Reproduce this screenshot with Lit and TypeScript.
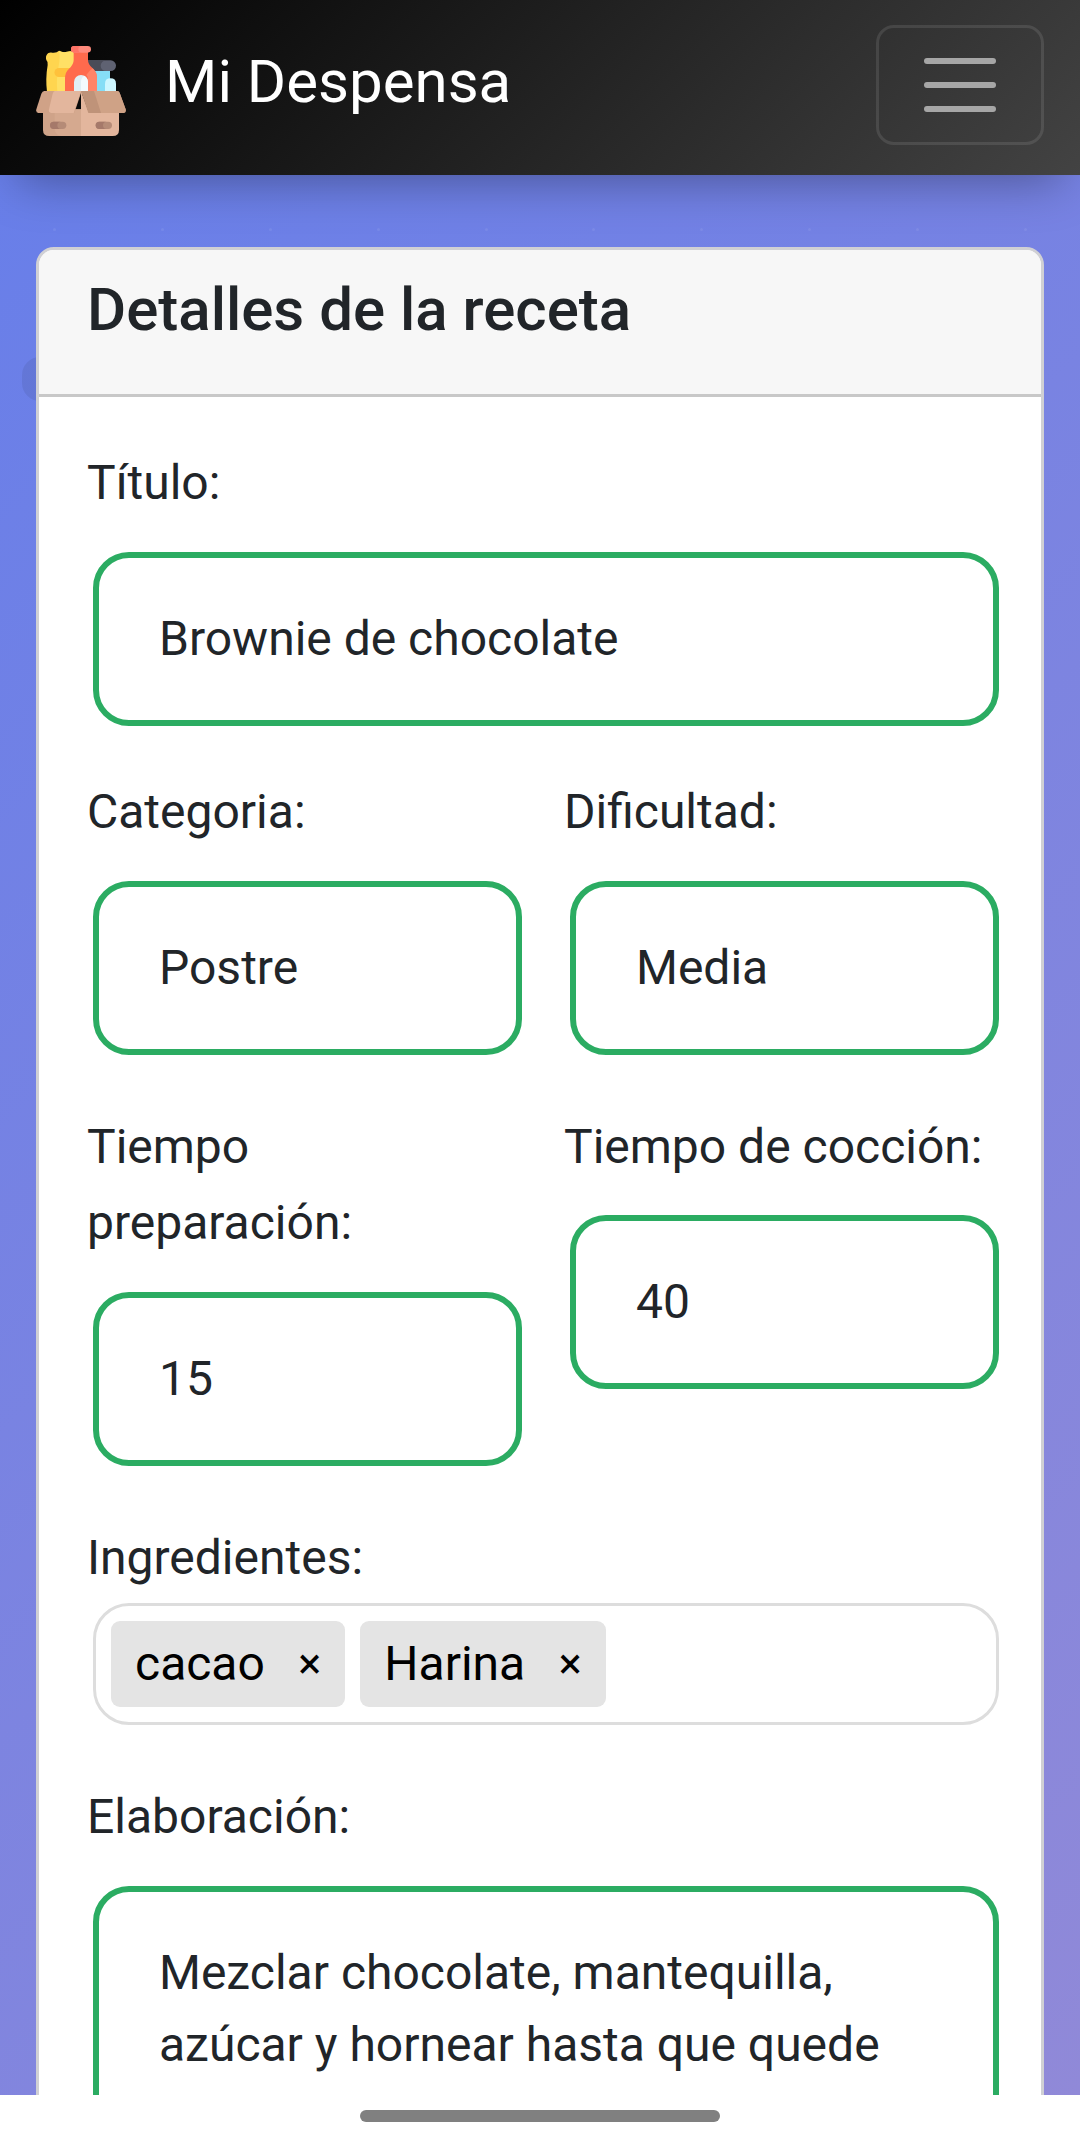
import { LitElement, html, css } from "lit";
import { customElement, property } from "lit/decorators.js";

@customElement("pantry-logo")
export class PantryLogo extends LitElement {
  static styles = css`
    :host { display: block; width: 90px; height: 90px; }
    .art { display: block; width: 90px; height: 90px; }
  `;
  render() {
    return html`<svg class="art" viewBox="0 0 270 270">
      <path d="M31 42C27 28 36 17 48 20Q62 22 69 14Q80 21 94 17Q110 13 116 22V138H33Q28 98 35 57Q37 48 31 42Z" fill="#ffd54f"/>
      <path d="M69 14Q80 21 94 17Q110 13 116 22V138H64Q60 98 68 60Q73 32 69 14Z" fill="#ffe065"/>
      <path d="M69 66H116V93H69A13.500 13.500 0 0 1 69 66Z" fill="#ffc13b"/>
      <rect x="150" y="70" width="72" height="68" fill="#86def6"/>
      <path d="M207 138V113Q207 97 223.500 97Q240 97 240 113V138Z" fill="#cdf7ff"/>
      <rect x="140" y="43" width="100" height="32" rx="16" fill="#5f6272"/>
      <path d="M140 43H210A16 16 0 0 0 210 75H140Z" fill="#4a4c58"/>
      <path d="M113 15H156V42Q156 56 170 67Q183 78 183 98V138H87V98Q87 78 99 68Q113 56 113 42Z" fill="#ff6a4d"/>
      <path d="M170 67Q183 78 183 98V138H156V98Q156 92 151 87Q158 76 170 67Z" fill="#ff8468"/>
      <rect x="105" y="0" width="60" height="20" rx="10" fill="#ff8a7c"/>
      <path d="M115 0H137A10 10 0 0 0 137 20H115A10 10 0 0 1 115 0Z" fill="#ff7467"/>
      <path d="M114 138V108A21 21 0 0 1 156 108V138Z" fill="#e0eff5"/>
      <path d="M135 138V106Q136 94 145 89Q156 96 156 108V138Z" fill="#f3fafd"/>
      <path d="M21 190H135V270H40Q21 270 21 252Z" fill="#cfa389"/>
      <path d="M64 190H135V135H137V270H76Q58 268 56 250V200Z" fill="#d5a98f"/>
      <path d="M135 135L157 195H249V252Q249 270 230 270H135Z" fill="#e3b69d"/>
      <path d="M25 135H137L115 201H7Q-1 199 1 190L16 143Q19 135 25 135Z" fill="#d0a287"/>
      <path d="M57 135H135L113 201H46Q36 199 39 190L50 143Q52 135 57 135Z" fill="#e3b69d"/>
      <path d="M135 135H245Q250 136 252 143L269 190Q271 199 263 201H157Z" fill="#bf9379"/>
      <path d="M174 135H245Q250 136 252 143L269 190Q271 199 263 201H195Z" fill="#cfa286"/>
      <rect x="42" y="227" width="49" height="22" rx="11" fill="#b58b77"/>
      <path d="M53 227H75A11 11 0 0 0 75 249H53A11 11 0 0 1 53 227Z" fill="#a5796a"/>
      <rect x="179" y="227" width="49" height="22" rx="11" fill="#b58b77"/>
      <path d="M190 227H212A11 11 0 0 0 212 249H190A11 11 0 0 1 190 227Z" fill="#a5796a"/>
    </svg>`;
  }
}

@customElement("recipe-field")
export class RecipeField extends LitElement {
  @property() label = "";
  @property() value = "";
  static styles = css`
    :host { display: block; min-width: 0; }
    .label { display: block; line-height: 76.8px; margin-bottom: 30px; }
    .control {
      box-sizing: border-box; width: 100%; margin: 0 0 0 6px;
      padding: 45px 60px; border: 6px solid #2bac62; border-radius: 36px;
      background: #fff; line-height: 72px; min-height: 174px;
    }
    :host([multiline]) .control { height: 318px; overflow: hidden; }
  `;
  render() {
    return html`<label class="label">${this.label}</label>
      <div class="control">${this.value}</div>`;
  }
}

@customElement("app-root")
export class AppRoot extends LitElement {
  static styles = css`
    :host {
      display: flex; flex-direction: column; width: 1080px; height: 2142px;
      overflow: hidden; background: #fff; color: #212529;
      font: 400 48px/1.6 Roboto, "Liberation Sans", sans-serif;
    }
    .screen {
      display: flex; flex-direction: column; height: 2095px; flex: none; overflow: hidden;
      position: relative;
      background: linear-gradient(135deg, #667eea 0%, #9089d8 100%);
    }
    .navbar {
      position: relative; box-sizing: border-box; height: 175px; flex: none;
      display: flex; align-items: center; padding: 0 36px 5px;
      background: linear-gradient(135deg, #000 0%, #434343 100%);
      box-shadow: 0 24px 48px -18px rgba(0, 0, 0, 0.34);
    }
    .logo { margin-top: 12px; }
    .brand { flex: 1; margin-left: 39px; font-size: 60px; line-height: 90px; color: #fff; margin-top: -6px; }
    .toggler {
      box-sizing: border-box; width: 168px; height: 120px; border: 3px solid rgba(255, 255, 255, 0.1);
      border-radius: 18px; display: flex; flex-direction: column; align-items: center;
      justify-content: center; gap: 18px;
    }
    .bar { width: 72px; height: 6px; border-radius: 3px; background: #a6a6a6; }
    .dots { display: flex; justify-content: space-between; padding: 53px 53px 0; height: 19px; flex: none; }
    .dot { width: 3px; height: 3px; border-radius: 50%; background: rgba(255, 255, 255, 0.08); }
    .shade { position: absolute; left: 22px; top: 357px; width: 60px; height: 44px; border-radius: 18px; background: rgba(0, 0, 0, 0.07); }
    .card {
      position: relative; box-sizing: border-box; width: 1008px; height: 2100px; flex: none;
      margin: 0 36px; border: 3px solid #d0d0d4; border-radius: 18px; background: #fff; overflow: hidden;
    }
    .card-header { box-sizing: border-box; height: 147px; padding: 24px 48px; background: #f7f7f7; border-bottom: 3px solid #c8c8c8; }
    .title { margin: 0; font-size: 60px; line-height: 72px; font-weight: 500; }
    .form { display: flex; flex-direction: column; gap: 54px; padding: 48px; }
    .row { display: grid; grid-template-columns: 1fr 1fr; gap: 48px; align-items: start; }
    .first { margin-bottom: -6px; }
    .choices {
      box-sizing: border-box; width: 100%; height: 122px; margin: 6px 0 0 6px; border: 3px solid #ddd;
      border-radius: 36px; padding: 15px; display: flex; gap: 15px; background: #fff;
    }
    .tag {
      box-sizing: border-box; height: 86px; padding: 0 24px; border-radius: 9px; background: #e4e4e4; color: #000;
      display: flex; align-items: center; line-height: 86px;
    }
    .remove { margin-left: 33.500px; font-size: 43px; line-height: 82px; margin-top: -2px; }
    .system { flex: 1; display: flex; justify-content: center; padding-top: 15px; }
    .pill { width: 360px; height: 12px; border-radius: 6px; background: #808080; }
  `;

  private tags = ["cacao", "Harina"];

  render() {
    return html`
      <div class="screen">
        <div class="shade"></div>
        <nav class="navbar">
          <pantry-logo class="logo"></pantry-logo>
          <span class="brand">Mi Despensa</span>
          <div class="toggler"><i class="bar"></i><i class="bar"></i><i class="bar"></i></div>
        </nav>
        <div class="dots">${Array.from({ length: 10 }, () => html`<i class="dot"></i>`)}</div>
        <main class="card">
          <header class="card-header"><h1 class="title">Detalles de la receta</h1></header>
          <div class="form">
            <recipe-field class="first" label="Título:" value="Brownie de chocolate"></recipe-field>
            <div class="row">
              <recipe-field label="Categoria:" value="Postre"></recipe-field>
              <recipe-field label="Dificultad:" value="Media"></recipe-field>
            </div>
            <div class="row">
              <recipe-field label="Tiempo preparación:" value="15"></recipe-field>
              <recipe-field label="Tiempo de cocción:" value="40"></recipe-field>
            </div>
            <div>
              <label>Ingredientes:</label>
              <div class="choices">
                ${this.tags.map((t) => html`<span class="tag">${t}<span class="remove">×</span></span>`)}
              </div>
            </div>
            <recipe-field multiline label="Elaboración:" value="Mezclar chocolate, mantequilla, azúcar y hornear hasta que quede"></recipe-field>
          </div>
        </main>
      </div>
      <div class="system"><div class="pill"></div></div>
    `;
  }
}
